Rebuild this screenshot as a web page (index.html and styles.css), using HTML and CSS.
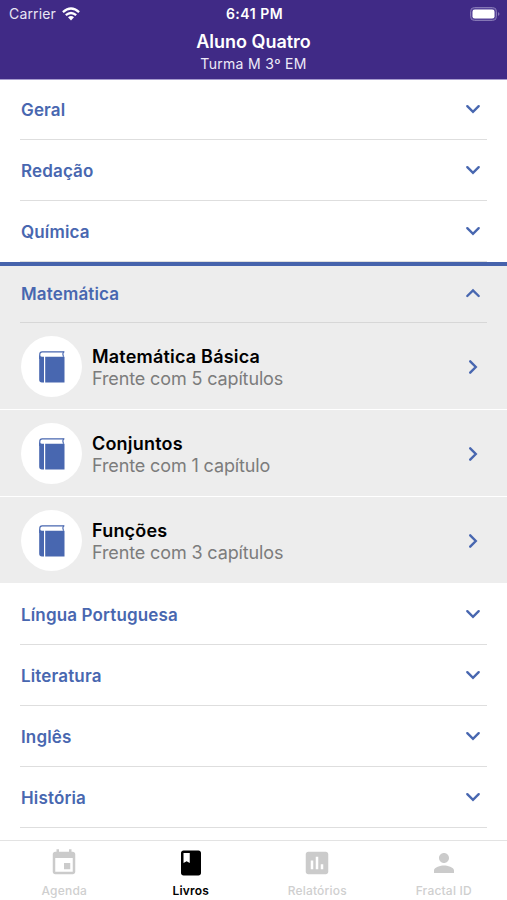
FILE: index.html
```html
<!DOCTYPE html>
<html lang="pt-BR">
<head>
<meta charset="utf-8">
<title>Livros</title>
<link rel="stylesheet" href="styles.css">
</head>
<body>
<svg class="defs" width="0" height="0">
  <symbol id="down" viewBox="0 0 16 16"><path d="M2.300 5.200 8 10.800l5.700-5.600" fill="none" stroke="currentColor" stroke-width="2.400" stroke-linecap="round"/></symbol>
  <symbol id="up" viewBox="0 0 16 16"><path d="M2.300 11 8 5.400 13.700 11" fill="none" stroke="currentColor" stroke-width="2.400" stroke-linecap="round"/></symbol>
  <symbol id="right" viewBox="0 0 16 16"><path d="M5.200 2.300 10.800 8 5.200 13.700" fill="none" stroke="currentColor" stroke-width="2.400" stroke-linecap="round"/></symbol>
  <symbol id="book" viewBox="0 0 26 32">
    <path d="M25.400 .8H3.200Q.8.800.8 3.200V8" fill="none" stroke="currentColor" stroke-width="1.200"/>
    <path d="M24.500.8q-1.400 2.300 0 4.900" fill="none" stroke="currentColor" stroke-width="1.200"/>
    <path d="M.2 4Q1 5.600 3 5.700h2V31.500H3Q.2 31.500.2 28.800zM6.200 5.700H25.500v25.800H6.200z" fill="currentColor"/>
  </symbol>
</svg>
<header class="header">
  <div class="status">
    <div class="carrier"><span>Carrier</span>
      <svg class="wifi" viewBox="0 0 18 14"><g fill="none" stroke="#fff" stroke-width="2.300"><path d="M.9 5.100Q9-2.100 17.100 5.100M3.800 8.200Q9 3.700 14.200 8.200"/></g><path d="M6 10.300Q9 7.900 12 10.300L9 13.400z" fill="#fff"/></svg>
    </div>
    <div class="time">6:41 PM</div>
    <svg class="battery" viewBox="0 0 30 14"><rect x=".5" y=".5" width="26" height="13" rx="4" fill="#58459a" stroke="#8577b5"/><rect x="2.500" y="2.500" width="22" height="9" rx="2.300" fill="#fff"/><path d="M28 5q3 2 0 4z" fill="#8577b5"/></svg>
  </div>
  <h1 class="student">Aluno Quatro</h1>
  <div class="group">Turma M 3º EM</div>
</header>
<main class="list">
  <div class="subject"><span>Geral</span><svg class="chev"><use href="#down"/></svg></div>
  <div class="subject"><span>Redação</span><svg class="chev"><use href="#down"/></svg></div>
  <div class="subject"><span>Química</span><svg class="chev"><use href="#down"/></svg></div>
  <section class="open">
    <div class="subject"><span>Matemática</span><svg class="chev"><use href="#up"/></svg></div>
    <div class="front">
      <div class="disc"><svg class="book"><use href="#book"/></svg></div>
      <div class="info"><div class="name">Matemática Básica</div><div class="count">Frente com 5 capítulos</div></div>
      <svg class="chev"><use href="#right"/></svg>
    </div>
    <div class="front">
      <div class="disc"><svg class="book"><use href="#book"/></svg></div>
      <div class="info"><div class="name">Conjuntos</div><div class="count">Frente com 1 capítulo</div></div>
      <svg class="chev"><use href="#right"/></svg>
    </div>
    <div class="front">
      <div class="disc"><svg class="book"><use href="#book"/></svg></div>
      <div class="info"><div class="name">Funções</div><div class="count">Frente com 3 capítulos</div></div>
      <svg class="chev"><use href="#right"/></svg>
    </div>
  </section>
  <div class="subject"><span>Língua Portuguesa</span><svg class="chev"><use href="#down"/></svg></div>
  <div class="subject"><span>Literatura</span><svg class="chev"><use href="#down"/></svg></div>
  <div class="subject"><span>Inglês</span><svg class="chev"><use href="#down"/></svg></div>
  <div class="subject"><span>História</span><svg class="chev"><use href="#down"/></svg></div>
</main>
<nav class="tabs">
  <div class="tab">
    <svg class="icon" viewBox="0 0 24 24"><path d="M17 12h-5v5h5v-5zM16 1v2H8V1H6v2H5c-1.110 0-1.990.9-1.990 2L3 19c0 1.100.89 2 2 2h14c1.100 0 2-.9 2-2V5c0-1.100-.9-2-2-2h-1V1h-2zm3 18H5V8h14v11z"/></svg>
    <span>Agenda</span>
  </div>
  <div class="tab active">
    <svg class="icon" viewBox="0 0 24 24"><path d="M18 2H6c-1.100 0-2 .9-2 2v16c0 1.100.9 2 2 2h12c1.100 0 2-.9 2-2V4c0-1.100-.9-2-2-2zM6 4h5v8l-2.500-1.500L6 12V4z"/></svg>
    <span>Livros</span>
  </div>
  <div class="tab">
    <svg class="icon" viewBox="0 0 24 24"><path d="M19 3H5c-1.100 0-2 .9-2 2v14c0 1.100.9 2 2 2h14c1.100 0 2-.9 2-2V5c0-1.100-.9-2-2-2zM9 17H7v-7h2v7zm4 0h-2V7h2v10zm4 0h-2v-4h2v4z"/></svg>
    <span>Relatórios</span>
  </div>
  <div class="tab">
    <svg class="icon" viewBox="0 0 24 24"><path d="M12 12c2.210 0 4-1.790 4-4s-1.790-4-4-4-4 1.790-4 4 1.790 4 4 4zm0 2c-2.670 0-8 1.340-8 4v2h16v-2c0-2.660-5.330-4-8-4z"/></svg>
    <span>Fractal ID</span>
  </div>
</nav>
</body>
</html>
```
FILE: styles.css
```css
* { box-sizing: border-box; }
body {
  margin: 0;
  width: 507px;
  height: 900px;
  overflow: hidden;
  display: flex;
  flex-direction: column;
  background: #fff;
  font-family: Inter, "Liberation Sans", sans-serif;
}
svg { display: block; flex: none; }
.defs { position: absolute; }
.header {
  height: 80px;
  flex: none;
  background: #402a86;
  background-clip: padding-box;
  border-bottom: 1px solid #a79bce;
  color: #fff;
  text-align: center;
}
.status {
  display: grid;
  grid-template-columns: 1fr auto 1fr;
  align-items: center;
  height: 27px;
  padding: 0 7px 0 9px;
}
.carrier { display: flex; align-items: center; gap: 6px; font-size: 14px; letter-spacing: .15px; color: #e9e5f4; }
.wifi { width: 18px; height: 14px; }
.time { font-size: 14px; font-weight: 600; letter-spacing: .5px; }
.battery { width: 30px; height: 14px; justify-self: end; }
.student { margin: 3px 0 0; font-size: 18px; line-height: 24px; font-weight: 600; }
.group { font-size: 14px; line-height: 20px; letter-spacing: .3px; color: #eeeaf8; }
.list { flex: 1; min-height: 0; margin-top: -1px; overflow: hidden; }
.subject {
  height: 61px;
  margin: 0 20px;
  padding-left: 1px;
  border-bottom: 1px solid #dedede;
  display: flex;
  align-items: center;
  justify-content: space-between;
  color: #4867b0;
  font-size: 17px;
  font-weight: 600;
  letter-spacing: .15px;
}
.subject span { padding-top: 2px; }
.chev { width: 16px; height: 16px; margin-right: 6px; color: #4867b0; }
.open { background: #ededed; border-top: 4px solid #4663ac; margin-bottom: 1px; }
.open .subject { height: 57px; padding-bottom: 3px; border-color: #d7d7d7; }
.front {
  height: 87px;
  padding: 1px 20px 0 21px;
  display: flex;
  align-items: center;
  border-bottom: 1px solid #fff;
}
.front:last-child { height: 86px; border-bottom: 0; }
.disc {
  width: 61px;
  height: 61px;
  border-radius: 50%;
  background: #fff;
  display: flex;
  align-items: center;
  justify-content: center;
}
.book { width: 26px; height: 32px; color: #4867b0; }
.info { flex: 1; margin-left: 10px; padding-top: 2px; }
.name { font-size: 18px; line-height: 22px; font-weight: 600; letter-spacing: .2px; color: #000; }
.count { font-size: 18px; line-height: 22px; letter-spacing: -.13px; color: #7c7c7c; }
.tabs {
  height: 60px;
  flex: none;
  display: grid;
  grid-template-columns: repeat(4, 1fr);
  padding-left: 1px;
  border-top: 1px solid #e3e3e3;
  background: #fff;
}
.tab {
  display: flex;
  flex-direction: column;
  align-items: center;
  padding-top: 7px;
  color: #cfcfcf;
  font-size: 12px;
  font-weight: 500;
  line-height: 16px;
  letter-spacing: .2px;
}
.tab.active { color: #000; font-weight: 600; }
.icon { width: 30px; height: 30px; margin-bottom: 5px; fill: #cbcbcb; }
.active .icon { fill: #000; }
```
